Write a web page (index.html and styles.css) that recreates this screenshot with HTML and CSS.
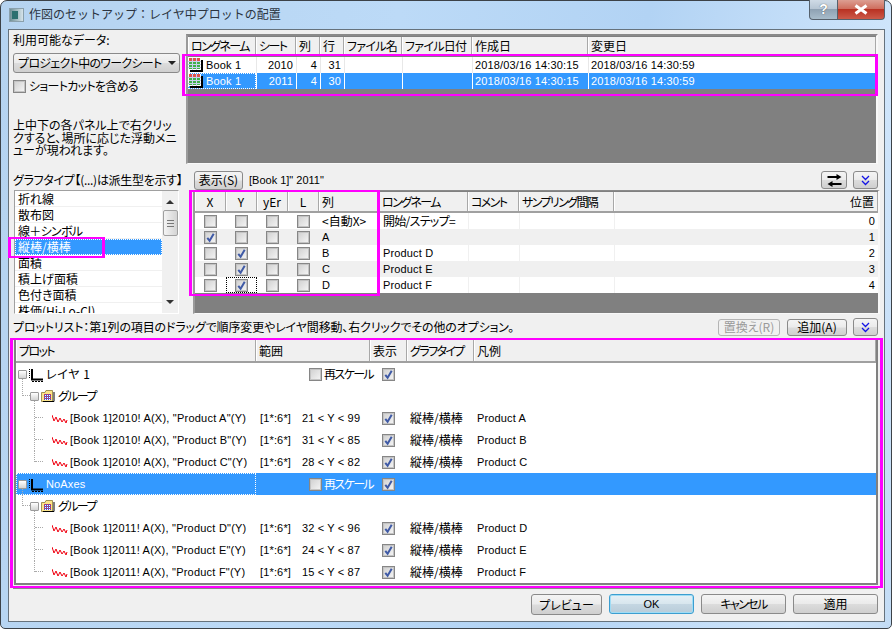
FILE: index.html
```html
<!DOCTYPE html>
<html lang="ja">
<head>
    <meta charset="UTF-8">
    <title>作図のセットアップ：レイヤ中プロットの配置</title>
    <link rel="stylesheet" href="styles.css">
</head>
<body>
    <svg class="defs" width="0" height="0">
        <symbol id="i-check" viewBox="0 0 12 12">
            <path d="M2.5 6.5 L5 9.5 L9.5 2" fill="none" stroke="#3f5aa6" stroke-width="2.2"/>
        </symbol>
        <symbol id="i-sheet" viewBox="0 0 15 14">
            <rect x="2" y="2" width="13" height="12" fill="#000"/>
            <rect x="0" y="0" width="13" height="12" fill="#fff"/>
            <rect x="1" y="0" width="11" height="3" fill="#e0524c"/>
            <rect x="1" y="3" width="11" height="8" fill="#3fb04a"/>
            <path d="M4.5 0V12M8.5 0V12M0 3.5H13M0 6.5H13M0 9.5H13" stroke="#c7d3ee" stroke-width="1"/>
        </symbol>
        <symbol id="i-layer" viewBox="0 0 14 15">
            <path d="M3 2V12.5H14" fill="none" stroke="#000" stroke-width="2"/>
            <path d="M0.5 2V11" stroke="#000" stroke-width="1" stroke-dasharray="1 1"/>
            <path d="M3 14.5H14" stroke="#000" stroke-width="1" stroke-dasharray="2 1"/>
        </symbol>
        <symbol id="i-group" viewBox="0 0 14 12">
            <path d="M0.5 2.5H4L5 0.5H11.5V11.5H0.5Z" fill="#fbe48a" stroke="#8a7a3a" stroke-width="0.8"/>
            <rect x="3" y="4" width="7" height="6" fill="#3a4ce0"/>
            <path d="M3 4.5H10M3 6.5H10M3 8.5H10" stroke="#f03a30" stroke-dasharray="1 1"/>
            <path d="M4 5.5H10M4 7.5H10M4 9.5H10" stroke="#fff" stroke-dasharray="1 1"/>
            <path d="M13 2V11.5H2" fill="none" stroke="#000"/>
        </symbol>
        <symbol id="i-plot" viewBox="0 0 16 9">
            <path d="M0 1 L2 7 L4 3 L6 8 L8 4 L10 8 L12 5 L14 9 L15 6" fill="none" stroke="#f00010" stroke-width="1"/>
        </symbol>
    </svg>

    <div class="window">
        <div class="titlebar">
            <div class="title-icon"><span></span></div>
            <div class="title-text">作図のセットアップ：レイヤ中プロットの配置</div>
            <div class="caption-buttons">
                <div class="cap-help">?</div>
                <div class="cap-close">
                    <svg width="16" height="11" viewBox="0 0 16 11"><path d="M2.5 1.5 L13.5 9.5 M13.5 1.5 L2.5 9.5" stroke="#fff" stroke-width="3"/></svg>
                </div>
            </div>
        </div>

        <div class="client">
            <div class="top-section">
                <div class="source-panel">
                    <div class="src-label">利用可能なデータ:</div>
                    <div class="combo btn"><span class="semi">プロジェクト中のワークシート</span><i class="arrow-down"></i></div>
                    <div class="check-line"><span class="cb"></span><span class="semi">ショートカットを含める</span></div>
                    <div class="src-hint">上中下の各パネル上で右クリックすると、場所に応じた浮動メニューが現われます。</div>
                </div>
                <div class="table sheets">
                    <div class="row head">
                        <div class="kana">ロングネーム</div><div class="kana">シート</div><div>列</div><div>行</div><div class="semi">ファイル名</div><div class="semi">ファイル日付</div><div>作成日</div><div>変更日</div>
                    </div>
                    <div class="row">
                        <div class="lat name-cell"><svg class="ico-sheet"><use href="#i-sheet"/></svg>Book 1</div>
                        <div class="lat num">2010</div><div class="lat num">4</div><div class="lat num">31</div><div></div><div></div>
                        <div class="lat date">2018/03/16 14:30:15</div><div class="lat date">2018/03/16 14:30:59</div>
                    </div>
                    <div class="row selected">
                        <div class="lat name-cell focus"><svg class="ico-sheet"><use href="#i-sheet"/></svg>Book 1</div>
                        <div class="lat num">2011</div><div class="lat num">4</div><div class="lat num">30</div><div></div><div></div>
                        <div class="lat date">2018/03/16 14:30:15</div><div class="lat date">2018/03/16 14:30:59</div>
                    </div>
                </div>
            </div>

            <div class="graph-bar">
                <div class="graph-label">グラフタイプ【(...)は派生型を示す】</div>
                <div class="btn show-btn">表示(S)</div>
                <div class="lat book-name">[Book 1]&quot; 2011&quot;</div>
                <div class="btn icon-btn swap-btn">
                    <svg width="15" height="13" viewBox="0 0 14 13"><path d="M0 2H9V0L14 3L9 6V4H0Z M14 9H5V7L0 10L5 13V11H14Z" fill="#000"/></svg>
                </div>
                <div class="btn icon-btn">
                    <svg width="9" height="11" viewBox="0 0 9 11"><path d="M1 1L4.5 4.5L8 1M1 6L4.5 9.5L8 6" fill="none" stroke="#1414e6" stroke-width="1.3"/></svg>
                </div>
            </div>

            <div class="middle-section">
                <div class="type-list">
                    <div class="type-items">
                        <div>折れ線</div>
                        <div>散布図</div>
                        <div class="semi">線＋シンボル</div>
                        <div class="selected focus">縦棒/横棒</div>
                        <div>面積</div>
                        <div>積上げ面積</div>
                        <div>色付き面積</div>
                        <div>株価(Hi-Lo-Cl)</div>
                    </div>
                    <div class="scrollbar">
                        <i class="arrow-up"></i>
                        <div class="thumb"><i class="grip"></i></div>
                        <i class="arrow-down small"></i>
                    </div>
                </div>
                <div class="table columns">
                    <div class="row head">
                        <div class="mid">X</div><div class="mid">Y</div><div class="mid">yEr</div><div class="mid">L</div><div>列</div><div class="kana">ロングネーム</div><div class="kana">コメント</div><div class="kana">サンプリング間隔</div><div class="right">位置</div>
                    </div>
                    <div class="row">
                        <div class="mid"><span class="cb"></span></div><div class="mid"><span class="cb"></span></div><div class="mid"><span class="cb"></span></div><div class="mid"><span class="cb"></span></div>
                        <div>&lt;自動X&gt;</div><div class="semi">開始/ステップ=</div><div></div><div></div><div class="lat right">0</div>
                    </div>
                    <div class="row alt">
                        <div class="mid"><span class="cb"><svg><use href="#i-check"/></svg></span></div><div class="mid"><span class="cb"></span></div><div class="mid"><span class="cb"></span></div><div class="mid"><span class="cb"></span></div>
                        <div class="lat">A</div><div></div><div></div><div></div><div class="lat right">1</div>
                    </div>
                    <div class="row">
                        <div class="mid"><span class="cb"></span></div><div class="mid"><span class="cb"><svg><use href="#i-check"/></svg></span></div><div class="mid"><span class="cb"></span></div><div class="mid"><span class="cb"></span></div>
                        <div class="lat">B</div><div class="lat">Product D</div><div></div><div></div><div class="lat right">2</div>
                    </div>
                    <div class="row alt">
                        <div class="mid"><span class="cb"></span></div><div class="mid"><span class="cb"><svg><use href="#i-check"/></svg></span></div><div class="mid"><span class="cb"></span></div><div class="mid"><span class="cb"></span></div>
                        <div class="lat">C</div><div class="lat">Product E</div><div></div><div></div><div class="lat right">3</div>
                    </div>
                    <div class="row">
                        <div class="mid"><span class="cb"></span></div><div class="mid focus"><span class="cb"><svg><use href="#i-check"/></svg></span></div><div class="mid"><span class="cb"></span></div><div class="mid"><span class="cb"></span></div>
                        <div class="lat">D</div><div class="lat">Product F</div><div></div><div></div><div class="lat right">4</div>
                    </div>
                </div>
            </div>

            <div class="plot-bar">
                <div class="plot-hint">プロットリスト：第1列の項目のドラッグで順序変更やレイヤ間移動、右クリックでその他のオプション。</div>
                <div class="btn disabled replace-btn">置換え(R)</div>
                <div class="btn add-btn">追加(A)</div>
                <div class="btn icon-btn">
                    <svg width="9" height="11" viewBox="0 0 9 11"><path d="M1 1L4.5 4.5L8 1M1 6L4.5 9.5L8 6" fill="none" stroke="#1414e6" stroke-width="1.3"/></svg>
                </div>
            </div>

            <div class="plot-frame">
                <div class="table plots">
                    <div class="row head">
                        <div class="kana">プロット</div><div>範囲</div><div>表示</div><div class="kana">グラフタイプ</div><div>凡例</div>
                    </div>

                    <div class="row">
                        <div class="tree"><span class="exp down"></span><svg class="ico-layer"><use href="#i-layer"/></svg><span class="layer-name">レイヤ 1</span></div>
                        <div class="rescale"><span class="cb"></span><span class="kana">再スケール</span></div>
                        <div class="mid"><span class="cb"><svg><use href="#i-check"/></svg></span></div>
                        <div></div><div></div>
                    </div>
                    <div class="row">
                        <div class="tree"><span class="elbow"></span><span class="exp down"></span><svg class="ico-group"><use href="#i-group"/></svg><span class="kana">グループ</span></div>
                        <div></div><div></div><div></div><div></div>
                    </div>
                    <div class="row">
                        <div class="tree leaf"><span class="guide"></span><svg class="ico-plot"><use href="#i-plot"/></svg><span class="lat">[Book 1]2010! A(X), &quot;Product A&quot;(Y)</span></div>
                        <div class="lat range"><span>[1*:6*]</span><span class="limits">21 &lt; Y &lt; 99</span></div>
                        <div class="mid"><span class="cb"><svg><use href="#i-check"/></svg></span></div>
                        <div>縦棒/横棒</div><div class="lat">Product A</div>
                    </div>
                    <div class="row">
                        <div class="tree leaf"><span class="guide"></span><svg class="ico-plot"><use href="#i-plot"/></svg><span class="lat">[Book 1]2010! A(X), &quot;Product B&quot;(Y)</span></div>
                        <div class="lat range"><span>[1*:6*]</span><span class="limits">31 &lt; Y &lt; 85</span></div>
                        <div class="mid"><span class="cb"><svg><use href="#i-check"/></svg></span></div>
                        <div>縦棒/横棒</div><div class="lat">Product B</div>
                    </div>
                    <div class="row">
                        <div class="tree leaf"><span class="guide last"></span><svg class="ico-plot"><use href="#i-plot"/></svg><span class="lat">[Book 1]2010! A(X), &quot;Product C&quot;(Y)</span></div>
                        <div class="lat range"><span>[1*:6*]</span><span class="limits">28 &lt; Y &lt; 82</span></div>
                        <div class="mid"><span class="cb"><svg><use href="#i-check"/></svg></span></div>
                        <div>縦棒/横棒</div><div class="lat">Product C</div>
                    </div>

                    <div class="row selected">
                        <div class="tree focus"><span class="exp down"></span><svg class="ico-layer"><use href="#i-layer"/></svg><span class="lat">NoAxes</span></div>
                        <div class="rescale"><span class="cb"></span><span class="kana">再スケール</span></div>
                        <div class="mid"><span class="cb"><svg><use href="#i-check"/></svg></span></div>
                        <div></div><div></div>
                    </div>
                    <div class="row">
                        <div class="tree"><span class="elbow"></span><span class="exp down"></span><svg class="ico-group"><use href="#i-group"/></svg><span class="kana">グループ</span></div>
                        <div></div><div></div><div></div><div></div>
                    </div>
                    <div class="row">
                        <div class="tree leaf"><span class="guide"></span><svg class="ico-plot"><use href="#i-plot"/></svg><span class="lat">[Book 1]2011! A(X), &quot;Product D&quot;(Y)</span></div>
                        <div class="lat range"><span>[1*:6*]</span><span class="limits">32 &lt; Y &lt; 96</span></div>
                        <div class="mid"><span class="cb"><svg><use href="#i-check"/></svg></span></div>
                        <div>縦棒/横棒</div><div class="lat">Product D</div>
                    </div>
                    <div class="row">
                        <div class="tree leaf"><span class="guide"></span><svg class="ico-plot"><use href="#i-plot"/></svg><span class="lat">[Book 1]2011! A(X), &quot;Product E&quot;(Y)</span></div>
                        <div class="lat range"><span>[1*:6*]</span><span class="limits">24 &lt; Y &lt; 87</span></div>
                        <div class="mid"><span class="cb"><svg><use href="#i-check"/></svg></span></div>
                        <div>縦棒/横棒</div><div class="lat">Product E</div>
                    </div>
                    <div class="row">
                        <div class="tree leaf"><span class="guide last"></span><svg class="ico-plot"><use href="#i-plot"/></svg><span class="lat">[Book 1]2011! A(X), &quot;Product F&quot;(Y)</span></div>
                        <div class="lat range"><span>[1*:6*]</span><span class="limits">15 &lt; Y &lt; 87</span></div>
                        <div class="mid"><span class="cb"><svg><use href="#i-check"/></svg></span></div>
                        <div>縦棒/横棒</div><div class="lat">Product F</div>
                    </div>
                </div>
            </div>

            <div class="footer">
                <div class="btn preview-btn">プレビュー</div>
                <div class="btn default lat">OK</div>
                <div class="btn"><span class="kana">キャンセル</span></div>
                <div class="btn">適用</div>
            </div>
        </div>

        <div class="mark mark-sheets"></div>
        <div class="mark mark-type"></div>
        <div class="mark mark-columns"></div>
        <div class="mark mark-plots"></div>
    </div>
</body>
</html>
```

FILE: styles.css
```css
* {
    box-sizing: border-box;
}
html, body {
    margin: 0;
    padding: 0;
}
body {
    width: 892px;
    height: 629px;
    overflow: hidden;
    background: #fff;
    color: #000;
    font-family: "Noto Sans CJK JP", "Liberation Sans", sans-serif;
    font-size: 12px;
    font-feature-settings: "palt";
    line-height: 16px;
}
.defs {
    position: absolute;
}
.lat {
    font-family: "Liberation Sans", sans-serif;
    font-size: 11px;
    letter-spacing: 0.15px;
}
.kana {
    letter-spacing: -1.6px;
}
.semi {
    letter-spacing: -0.7px;
}

/* window frame */
.window {
    position: relative;
    width: 892px;
    height: 629px;
    display: flex;
    flex-direction: column;
    padding: 0 6px 6px 7px;
    border: 1px solid #3c4248;
    border-radius: 7px 7px 5px 5px;
    background: linear-gradient(100deg, #b5d3f0 0%, #bcdaf7 40%, #b2d3f4 65%, #cfe5fb 90%, #c3dcf5 100%);
}
.titlebar {
    height: 28px;
    flex: none;
    display: flex;
    align-items: center;
    margin-left: 1px;
}
.title-icon {
    width: 15px;
    height: 14px;
    padding: 2px;
    background: linear-gradient(90deg, #6f8f96, #d5e3ea);
    border: 1px solid #8aa0ac;
}
.title-icon span {
    display: block;
    width: 6px;
    height: 8px;
    background: #2c6f70;
}
.title-text {
    margin-left: 5px;
    margin-top: -2px;
    color: #2b3440;
    font-feature-settings: normal;
    letter-spacing: 0;
}
.caption-buttons {
    margin-left: auto;
    align-self: flex-start;
    display: flex;
    margin-top: -1px;
    height: 20px;
}
.cap-help {
    width: 29px;
    border: 1px solid #56616c;
    border-top: none;
    border-radius: 0 0 0 4px;
    background: linear-gradient(#cfdbe6 0%, #b7c6d4 45%, #8fa2b3 50%, #a8bccb 100%);
    color: #fff;
    text-align: center;
    font-family: "Liberation Sans", sans-serif;
    font-weight: bold;
    font-size: 14px;
    line-height: 18px;
    text-shadow: 0 0 1px #333;
}
.cap-close {
    width: 47px;
    display: flex;
    align-items: center;
    justify-content: center;
    border: 1px solid #56616c;
    border-left: none;
    border-top: none;
    border-radius: 0 0 4px 0;
    background: linear-gradient(#dc9e92 0%, #cf6f5f 45%, #b93223 50%, #cc5a49 100%);
}

/* dialog body */
.client {
    flex: 1;
    display: flex;
    flex-direction: column;
    border: 1px solid #66727c;
    background: #f0f0f0;
    padding-left: 4px;
    padding-right: 6px;
}
.btn {
    display: flex;
    align-items: center;
    justify-content: center;
    height: 20px;
    border: 1px solid #8a8a8a;
    border-radius: 3px;
    background: linear-gradient(#f4f4f4 0%, #ebebeb 48%, #dcdcdc 52%, #cfcfcf 100%);
    white-space: nowrap;
}
.btn.disabled {
    border-color: #b4b4b4;
    color: #9a9a9a;
    background: #f0f0f0;
}
.btn.default {
    border: 1px solid #3c9ed0;
    box-shadow: inset 0 0 0 1px #9fdcf5;
    background: linear-gradient(#e6f0f6 0%, #d8e6ee 48%, #c4d6e2 52%, #b8ccd9 100%);
}
.cb {
    display: inline-block;
    flex: none;
    width: 13px;
    height: 13px;
    border: 1px solid #868686;
    box-shadow: inset 0 0 0 1px #c4c4c4;
    background: linear-gradient(135deg, #cfcfcf, #f6f6f6);
}
.cb svg {
    display: block;
    width: 11px;
    height: 11px;
}
.arrow-down, .arrow-up {
    display: block;
    width: 0;
    height: 0;
    border-left: 4px solid transparent;
    border-right: 4px solid transparent;
    border-top: 4px solid #222;
}
.arrow-up {
    border-top: none;
    border-bottom: 4px solid #333;
}
.arrow-down.small {
    border-top-color: #333;
}

/* top: data source */
.top-section {
    height: 130px;
    margin-top: 4px;
    flex: none;
    display: flex;
}
.source-panel {
    width: 173px;
    flex: none;
    display: flex;
    flex-direction: column;
}
.src-label {
    margin-top: -2px;
    height: 21px;
}
.combo {
    width: 167px;
    height: 20px;
    justify-content: space-between;
    padding: 0 3px 0 4px;
}
.check-line {
    display: flex;
    align-items: center;
    gap: 3px;
    margin-top: 5px;
}
.src-hint {
    margin-top: 25px;
    width: 168px;
    line-height: 12.5px;
}

/* tables */
.table {
    flex: 1;
    background: #808080;
    border: 2px solid;
    border-color: #8a8a8a #f8f8f8 #f8f8f8 #9a9a9a;
    border-bottom-width: 1px;
    overflow: hidden;
}
.row {
    display: grid;
    background: #fff;
}
.row > div {
    display: flex;
    align-items: center;
    white-space: nowrap;
    padding-left: 3px;
    padding-right: 3px;
    min-width: 0;
}
.head {
    background: #f0f0f0;
    border-bottom: 2px solid #a0a0a0;
}
.head > div {
    border-right: 1px solid #a8a8a8;
    box-shadow: inset 1px 0 0 #fff;
}
.row.alt {
    background: #f0f0f0;
}
.row.selected {
    background: #3399ff;
    color: #fff;
}
.mid {
    justify-content: center;
    padding: 0 !important;
}
.right {
    justify-content: flex-end;
}
.focus {
    outline: 1px dotted #fff;
    outline-offset: -1px;
}
.columns .focus {
    outline-color: #000;
}

.sheets {
    height: 130px;
}
.sheets .row {
    grid-template-columns: 68px 40px 24px 24px 58px 70px 116px 1fr;
    height: 16px;
}
.sheets .head {
    height: 19px;
    margin-top: 1px;
}
.sheets .row:not(.head) > div + div {
    border-left: 1px solid #e8e8e8;
}
.sheets .selected > div + div {
    border-left-color: #fff !important;
}
.sheets .row.head + .row {
    margin-top: 1px;
}
.num {
    justify-content: flex-end;
    padding-right: 3px !important;
}
.date {
    padding-left: 2px !important;
}
.name-cell {
    gap: 3px;
    padding-left: 0 !important;
}
.ico-sheet {
    width: 15px;
    height: 14px;
    flex: none;
}

/* graph type bar */
.graph-bar {
    height: 20px;
    margin-top: 6px;
    flex: none;
    display: flex;
    align-items: center;
}
.graph-label {
    width: 181px;
    letter-spacing: -0.3px;
    white-space: nowrap;
}
.show-btn {
    width: 49px;
    height: 19px;
}
.book-name {
    margin-left: 6px;
    letter-spacing: 0;
}
.icon-btn {
    width: 25px;
    height: 18px;
    margin-left: 6px;
}
.swap-btn {
    margin-left: auto;
    width: 26px;
}

/* type list + column table */
.middle-section {
    height: 124px;
    flex: none;
    display: flex;
}
.type-list {
    width: 165px;
    height: 124px;
    flex: none;
    display: flex;
    margin-left: 1px;
    border: 1px solid;
    border-color: #a0a0a0 #fff #fff #a0a0a0;
    background: #fff;
    overflow: hidden;
}
.type-items {
    flex: 1;
    min-width: 0;
}
.type-items div {
    height: 16px;
    padding-left: 3px;
    border-bottom: 1px solid #f0f0f0;
}
.type-items .selected {
    background: #3399ff;
    color: #fff;
    border-bottom: none;
}
.scrollbar {
    width: 16px;
    flex: none;
    display: flex;
    flex-direction: column;
    align-items: center;
    background: #f0f0f0;
    padding-top: 9px;
}
.thumb {
    display: flex;
    align-items: center;
    justify-content: center;
    width: 15px;
    height: 26px;
    margin-top: 6px;
    border: 1px solid #a0a0a0;
    border-radius: 2px;
    background: linear-gradient(90deg, #f4f4f4, #d4d4d4);
}
.grip {
    display: block;
    width: 7px;
    height: 7px;
    background: repeating-linear-gradient(#777 0, #777 1px, transparent 1px, transparent 3px);
}
.scrollbar .arrow-down {
    margin-top: 64px;
}
.columns {
    flex: none;
    width: 687px;
    margin-left: 14px;
    height: 124px;
    border-top-width: 1px;
    padding-top: 1px;
}
.columns .row {
    grid-template-columns: 31px 31px 31px 31px 60px 89px 51px 95px 1fr;
    height: 16px;
}
.columns .row:not(.head) > div:nth-child(n+6) {
    border-left: 1px solid #f0f0f0;
}
.columns .head {
    height: 21px;
}

/* plot list */
.plot-bar {
    height: 24px;
    flex: none;
    display: flex;
    align-items: center;
    padding-top: 2px;
}
.plot-hint {
    flex: 1;
    letter-spacing: -0.14px;
    white-space: nowrap;
}
.replace-btn {
    width: 62px;
    height: 17px;
}
.add-btn {
    width: 60px;
    height: 17px;
    margin-left: 7px;
}
.plot-frame {
    flex: none;
    height: 251px;
    border-bottom: 1px solid #8a8a8a;
    padding-left: 1px;
}
.plots {
    height: 247px;
    border-color: #808080;
    border-bottom-width: 2px;
    background: #fff;
}
.plots .row {
    grid-template-columns: 240px 114px 37px 67px 1fr;
    height: 22px;
}
.plots .head {
    height: 23px;
}
.layer-name {
    letter-spacing: 0.6px;
}
.tree {
    position: relative;
    padding-left: 2px !important;
}
.exp {
    position: relative;
    flex: none;
    width: 9px;
    height: 9px;
    border: 1px solid #9a9a9a;
    border-radius: 1px;
    background: linear-gradient(#fff, #d4d4d4);
    margin-right: 2px;
}
.exp.down::after {
    content: "";
    position: absolute;
    left: 3px;
    top: 8px;
    height: 7px;
    border-left: 1px dotted #aaa;
}
.elbow {
    flex: none;
    align-self: flex-start;
    width: 8px;
    height: 11px;
    margin-left: 4px;
    border-left: 1px dotted #aaa;
    border-bottom: 1px dotted #aaa;
}
.ico-layer {
    width: 14px;
    height: 15px;
    flex: none;
    margin-right: 3px;
}
.ico-group {
    width: 14px;
    height: 12px;
    flex: none;
    margin-right: 3px;
}
.leaf {
    padding-left: 0 !important;
}
.leaf .lat {
    letter-spacing: 0.22px;
}
.guide {
    position: relative;
    flex: none;
    align-self: stretch;
    width: 9px;
    margin-left: 18px;
    margin-right: 9px;
    border-left: 1px dotted #aaa;
}
.guide::after {
    content: "";
    position: absolute;
    left: 0;
    top: 10px;
    width: 8px;
    border-top: 1px dotted #aaa;
}
.guide.last {
    align-self: flex-start;
    height: 11px;
}
.ico-plot {
    width: 16px;
    height: 9px;
    flex: none;
    margin-right: 2px;
}
.rescale {
    justify-content: flex-start;
    gap: 2px;
    padding-left: 53px !important;
    padding-right: 0 !important;
}
.range {
    padding-left: 4px !important;
}
.limits {
    margin-left: 11px;
}

/* bottom buttons */
.footer {
    flex: 1;
    display: flex;
    justify-content: flex-end;
    align-items: flex-start;
    gap: 7px;
    padding-top: 5px;
}
.footer .btn {
    width: 85px;
}
.footer .preview-btn {
    width: 71px;
    height: 21px;
}

/* magenta annotation boxes */
.mark {
    position: absolute;
    border-style: solid;
    border-color: #ff00ff;
    border-width: 2px 3px;
    pointer-events: none;
}
.mark-sheets {
    left: 181px;
    top: 53px;
    width: 696px;
    height: 42px;
}
.mark-type {
    left: 7px;
    top: 236px;
    width: 97px;
    height: 21px;
}
.mark-columns {
    left: 188px;
    top: 189px;
    width: 191px;
    height: 106px;
}
.mark-plots {
    left: 9px;
    top: 337px;
    width: 873px;
    height: 250px;
}
```
